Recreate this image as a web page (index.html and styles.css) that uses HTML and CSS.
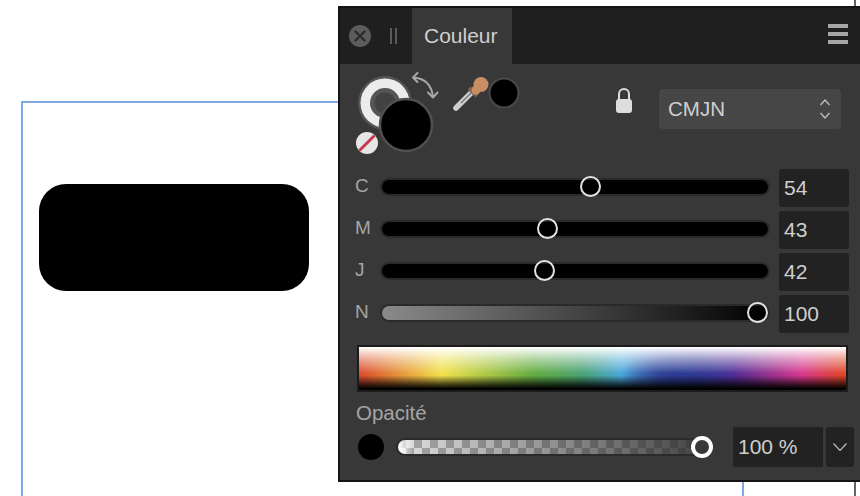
FILE: index.html
```html
<!DOCTYPE html>
<html lang="fr">
<head>
  <meta charset="UTF-8">
  <title>Couleur</title>
  <link rel="stylesheet" href="styles.css">
</head>
<body>
  <div class="canvas-edge"></div>

  <div class="artboard">
    <div class="shape"></div>
  </div>

  <div class="panel">
    <div class="panel-header">
      <svg class="close-icon" width="22" height="22" viewBox="0 0 22 22">
        <circle cx="11" cy="11" r="11" fill="#5c5c5c"/>
        <path d="M6.500 6.500l9 9M15.500 6.500l-9 9" stroke="#2b2b2b" stroke-width="2.400" stroke-linecap="round"/>
      </svg>
      <div class="grip"></div>
      <div class="tab">Couleur</div>
      <div class="menu-icon"><span></span><span></span><span></span></div>
    </div>

    <div class="top-row">
      <svg class="wells" width="170" height="95" viewBox="355 68 170 95">
        <!-- back well -->
        <circle cx="385" cy="103" r="27" fill="#555"/>
        <circle cx="385" cy="103" r="24.500" fill="#ececec"/>
        <circle cx="385" cy="103" r="15" fill="#555"/>
        <circle cx="385" cy="103" r="10.500" fill="#424242"/>
        <!-- front well -->
        <circle cx="406" cy="125" r="26" fill="#000" stroke="#505050" stroke-width="2.500"/>
        <!-- none -->
        <circle cx="367" cy="143" r="11" fill="#e6e6e6"/>
        <path d="M359.500 150.500l15-15" stroke="#c53a4e" stroke-width="3"/>
        <!-- swap arrows -->
        <path d="M413.500 77.500Q431 79 433 97M417.500 73L413 77.500L417.500 82M428 92.500L433 97.500L437.500 92.500" fill="none" stroke="#a8a8a8" stroke-width="2" stroke-linecap="round" stroke-linejoin="round"/>
        <!-- dropper -->
        <path d="M456 108L472 92" stroke="#cfcfcf" stroke-width="5.500" stroke-linecap="round"/>
        <path d="M461 103L472 92" stroke="#777" stroke-width="1.500"/>
        <path d="M469 88L477 96" stroke="#7d6350" stroke-width="4"/>
        <circle cx="481" cy="84.500" r="7.500" fill="#c98d63"/>
        <circle cx="476" cy="90" r="4.500" fill="#c98d63"/>
        <!-- small well -->
        <circle cx="504" cy="93" r="14.500" fill="#000" stroke="#4a4a4a" stroke-width="2"/>
      </svg>
      <svg class="lock" width="16" height="26" viewBox="0 0 16 26">
        <path d="M3 13V7a5 5 0 0 1 10 0v6" fill="none" stroke="#dedede" stroke-width="2"/>
        <rect x="0" y="12" width="16" height="14" rx="3" fill="#dedede"/>
      </svg>
      <div class="select">
        <span>CMJN</span>
        <svg width="10" height="20" viewBox="0 0 10 20">
          <path d="M.5 6L5 1l4.500 5M.5 14L5 19l4.500-5" fill="none" stroke="#c4c4c4" stroke-width="1.200"/>
        </svg>
      </div>
    </div>

    <div class="slider-row">
      <span class="slider-label">C</span>
      <div class="track"><div class="thumb" style="left: 53.9%"></div></div>
      <div class="value">54</div>
    </div>
    <div class="slider-row">
      <span class="slider-label">M</span>
      <div class="track"><div class="thumb" style="left: 43%"></div></div>
      <div class="value">43</div>
    </div>
    <div class="slider-row">
      <span class="slider-label">J</span>
      <div class="track"><div class="thumb" style="left: 42%"></div></div>
      <div class="value">42</div>
    </div>
    <div class="slider-row">
      <span class="slider-label">N</span>
      <div class="track track-black"><div class="thumb" style="left: 97.3%"></div></div>
      <div class="value">100</div>
    </div>

    <div class="spectrum"></div>

    <div class="opacity-label">Opacité</div>
    <div class="opacity-row">
      <div class="opacity-dot"></div>
      <div class="opacity-track"><div class="opacity-thumb"></div></div>
      <div class="opacity-value">100 %</div>
      <div class="opacity-arrow">
        <svg width="14" height="8" viewBox="0 0 14 8">
          <path d="M.5 .5L7 7.500L13.500 .5" fill="none" stroke="#bdbdbd" stroke-width="1.200"/>
        </svg>
      </div>
    </div>
  </div>
</body>
</html>
```

FILE: styles.css
```css
html, body {
  margin: 0;
  height: 496px;
  overflow: hidden;
}
body {
  position: relative;
  box-sizing: border-box;
  padding: 101px 0 0 21px;
  background: #fff;
  font-family: "Liberation Sans", Arial, sans-serif;
}
.canvas-edge {
  position: absolute;
  left: 854px;
  top: 0;
  width: 2px;
  height: 496px;
  background: #666;
}
.artboard {
  box-sizing: border-box;
  width: 723px;
  height: 395px;
  padding: 81px 0 0 16px;
  border: 2px solid #7ea9e2;
  border-bottom: none;
}
.shape {
  width: 270px;
  height: 107px;
  background: #000;
  border-radius: 27px;
}

.panel {
  position: absolute;
  left: 338px;
  top: 6px;
  right: 0;
  height: 476px;
  box-sizing: border-box;
  border: 2px solid #141414;
  border-right: none;
  background: #383838;
  color: #cfcfcf;
}
.panel-header {
  display: flex;
  align-items: center;
  height: 56px;
  background: #1f1f1f;
}
.close-icon { margin-left: 9px; }
.grip {
  width: 3px;
  height: 16px;
  margin-left: 19px;
  border-left: 2px solid #5a5a5a;
  border-right: 2px solid #5a5a5a;
}
.tab {
  display: flex;
  align-items: center;
  height: 56px;
  margin-left: 15px;
  padding: 0 14px 0 12px;
  width: 74px;
  background: #383838;
  font-size: 21px;
}
.menu-icon {
  display: flex;
  flex-direction: column;
  gap: 4px;
  margin: 0 12px 4px auto;
  width: 20px;
}
.menu-icon span {
  height: 4px;
  background: #a5a5a5;
}

.top-row {
  display: flex;
  align-items: flex-start;
  box-sizing: border-box;
  height: 105px;
  padding: 4px 0 0 15px;
}
.lock { margin: 19px 0 0 91px; }
.select {
  display: flex;
  align-items: center;
  justify-content: space-between;
  box-sizing: border-box;
  width: 182px;
  height: 40px;
  margin: 21px 0 0 27px;
  padding: 0 11px 0 9px;
  background: #464646;
  border-radius: 4px;
  font-size: 20.500px;
}

.slider-row {
  display: flex;
  align-items: center;
  height: 38px;
  margin-bottom: 4px;
  padding-left: 15px;
}
.slider-label {
  width: 25px;
  margin-bottom: 5px;
  font-size: 19px;
  color: #a5a5a5;
}
.track {
  position: relative;
  box-sizing: border-box;
  width: 390px;
  height: 18px;
  margin-bottom: 3px;
  background: #000;
  border: 2px solid #2a2a2a;
  border-radius: 9px;
}
.track-black {
  background: linear-gradient(to right, #8a8a8a, #000);
}
.thumb {
  position: absolute;
  top: 50%;
  box-sizing: border-box;
  width: 21px;
  height: 21px;
  margin: -10.500px 0 0 -10.500px;
  border: 2.500px solid #e2e2e2;
  border-radius: 50%;
  background: rgba(0, 0, 0, 0.2);
}
.value {
  box-sizing: border-box;
  width: 70px;
  height: 38px;
  margin-left: 9px;
  padding-left: 5px;
  background: #222;
  border-radius: 3px;
  font-size: 21px;
  line-height: 38px;
}

.spectrum {
  box-sizing: border-box;
  width: 491px;
  height: 47px;
  margin: 12px 0 0 17px;
  border: 2px solid #1c1c1c;
  background:
    linear-gradient(to bottom, #fff 0, rgba(255,255,255,0.55) 25%, rgba(255,255,255,0) 62%),
    linear-gradient(to bottom, rgba(0,0,0,0) 66%, rgba(0,0,0,0.65) 85%, #000 97%),
    radial-gradient(ellipse 60px 22px at 66% 62%, #2b3a90 0, rgba(43,58,144,0) 100%),
    linear-gradient(to right, #db4a2c 0, #f2e24c 17%, #62ac42 36%, #4aa274 46%, #4aa9dc 54%, #3a55a8 62%, #35389a 68%, #542c96 77%, #d8388c 91%, #e0471f 100%);
}

.opacity-label {
  height: 35px;
  padding-left: 16px;
  font-size: 20.500px;
  line-height: 41px;
  color: #a5a5a5;
}
.opacity-row {
  display: flex;
  align-items: center;
  height: 40px;
  padding-left: 18px;
}
.opacity-dot {
  width: 26px;
  height: 26px;
  border-radius: 50%;
  background: #000;
}
.opacity-track {
  position: relative;
  box-sizing: border-box;
  width: 316px;
  height: 18px;
  margin-left: 12px;
  border: 2px solid #2a2a2a;
  border-radius: 9px;
  background:
    linear-gradient(to right, #fff 0, rgba(255,255,255,0) 5%),
    linear-gradient(to right, rgba(42,42,42,0), rgba(42,42,42,0.85) 97%),
    repeating-conic-gradient(#e0e0e0 0 25%, #a8a8a8 0 50%) 0 0 / 16px 16px;
}
.opacity-thumb {
  position: absolute;
  right: -3px;
  top: 50%;
  box-sizing: border-box;
  width: 22px;
  height: 22px;
  margin-top: -11px;
  border: 4px solid #fff;
  border-radius: 50%;
  background: #383838;
}
.opacity-value {
  box-sizing: border-box;
  width: 90px;
  height: 40px;
  margin-left: 21px;
  padding-left: 5px;
  background: #222;
  border-radius: 2px;
  font-size: 21px;
  line-height: 40px;
}
.opacity-arrow {
  display: flex;
  align-items: center;
  justify-content: center;
  width: 28px;
  height: 40px;
  margin-left: 3px;
  background: #222;
  border-radius: 3px;
}
```
